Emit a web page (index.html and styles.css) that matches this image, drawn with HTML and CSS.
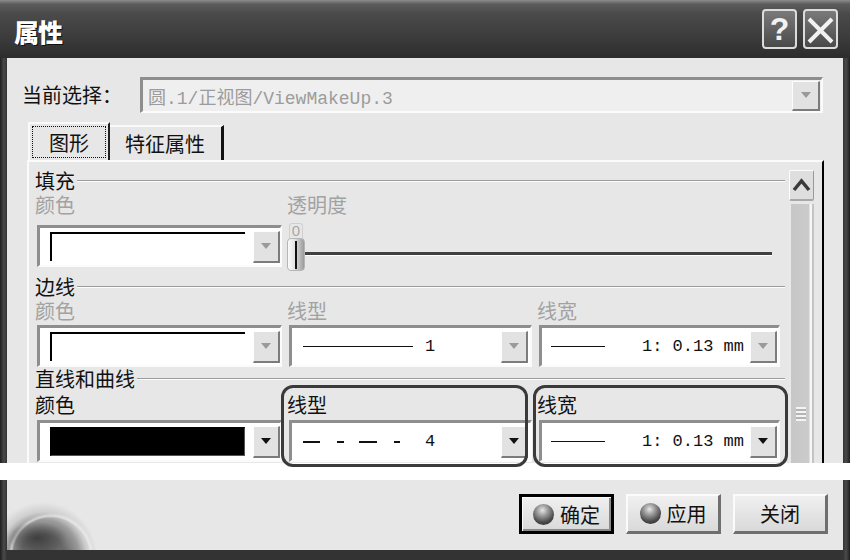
FILE: index.html
```html
<!DOCTYPE html>
<html lang="zh-CN">
<head>
<meta charset="utf-8">
<title>属性</title>
<link rel="stylesheet" href="styles.css">
</head>
<body>
<div class="window">
  <div class="titlebar">
    <span class="title">属性</span>
    <div class="title-btns">
      <span class="tbtn help">?</span>
      <span class="tbtn close"><svg width="35" height="40" viewBox="0 0 35 40"><path d="M6 10 L29 33 M29 10 L6 33" stroke="#f2f2f2" stroke-width="4" fill="none"/></svg></span>
    </div>
  </div>

  <div class="client">
    <div class="selrow">
      <span class="sellabel">当前选择：</span>
      <div class="selcombo">
        <span class="seltext">圆.1/正视图/ViewMakeUp.3</span>
        <span class="dd dis"></span>
      </div>
    </div>

    <div class="tabs">
      <div class="tab active"><span class="focus">图形</span></div>
      <div class="tab">特征属性</div>
    </div>

    <div class="panel">
      <div class="content">
        <div class="group g1">
          <div class="legend"><span>填充</span><i class="etch"></i></div>
          <div class="grid">
            <div class="lbl dis">颜色</div>
            <div class="lbl dis wide">透明度</div>
            <div class="combo">
              <span class="swatch"></span>
              <span class="dd dis"></span>
            </div>
            <div class="slider wide">
              <div class="thumb">
                <span class="tick">0</span>
                <span class="knob"></span>
              </div>
              <div class="track"></div>
            </div>
          </div>
        </div>

        <div class="group g2">
          <div class="legend"><span>边线</span><i class="etch"></i></div>
          <div class="grid">
            <div class="lbl dis">颜色</div>
            <div class="lbl dis">线型</div>
            <div class="lbl dis">线宽</div>
            <div class="combo">
              <span class="swatch"></span>
              <span class="dd dis"></span>
            </div>
            <div class="combo lt">
              <span class="sample long"></span>
              <span class="val">1</span>
              <span class="dd dis"></span>
            </div>
            <div class="combo lw">
              <span class="sample short"></span>
              <span class="val right">1: 0.13 mm</span>
              <span class="dd dis"></span>
            </div>
          </div>
        </div>

        <div class="group g3">
          <div class="legend"><span>直线和曲线</span><i class="etch"></i></div>
          <div class="grid">
            <div class="lbl">颜色</div>
            <div class="lbl">线型</div>
            <div class="lbl">线宽</div>
            <div class="combo">
              <span class="swatch black"></span>
              <span class="dd"></span>
            </div>
            <div class="combo lt">
              <svg class="dash" width="110" height="4" viewBox="0 0 110 4"><path d="M0 2 H17 M34 2 H41 M56 2 H74 M91 2 H97" stroke="#111" stroke-width="2" fill="none"/></svg>
              <span class="val">4</span>
              <span class="dd"></span>
            </div>
            <div class="combo lw">
              <span class="sample short"></span>
              <span class="val right">1: 0.13 mm</span>
              <span class="dd"></span>
            </div>
          </div>
        </div>
      </div>

      <div class="scrollbar">
        <div class="sb-up"><svg width="23" height="28" viewBox="0 0 23 28"><path d="M4 19 L11.5 10 L19 19" stroke="#3a3a3a" stroke-width="3.5" fill="none"/></svg></div>
        <div class="sb-track"><span class="grip"></span></div>
      </div>
    </div>
  </div>

  <div class="band"></div>

  <div class="footer">
    <button class="btn default"><span class="orb"></span>确定</button>
    <button class="btn"><span class="orb"></span>应用</button>
    <button class="btn">关闭</button>
  </div>

  <div class="mark m1"></div>
  <div class="mark m2"></div>
</div>
</body>
</html>
```

FILE: styles.css
```css
html, body {
  margin: 0;
  padding: 0;
  background: #ffffff;
}

.window {
  position: relative;
  width: 850px;
  height: 560px;
  background: linear-gradient(to right, #1f1f1f 0, #4a4a4a 4px, #333 7px, #333 843px, #4a4a4a 846px, #1f1f1f 850px);
  display: flex;
  flex-direction: column;
  font-family: "Noto Sans CJK SC", "Noto Sans", sans-serif;
  color: #111;
  overflow: hidden;
}

/* title bar */
.titlebar {
  flex: none;
  height: 58px;
  box-sizing: border-box;
  display: flex;
  align-items: center;
  padding: 4px 12px 0 14px;
  background: linear-gradient(#8d8d8d 0, #5d5d5d 4px, #4a4a4a 14px, #3d3d3d 36px, #2c2c2c 58px);
}

.title {
  font-size: 25px;
  font-weight: 900;
  color: #fff;
  letter-spacing: -1px;
  text-shadow: 1px 1px 0 #111;
}

.title-btns {
  margin-left: auto;
  display: flex;
  gap: 6px;
  margin-top: -4px;
}

.tbtn {
  width: 35px;
  height: 40px;
  box-sizing: border-box;
  border: 2px solid #dcdcdc;
  border-radius: 4px;
  background: linear-gradient(#7a7a7a, #4a4a4a);
  color: #f2f2f2;
  display: flex;
  align-items: center;
  justify-content: center;
  overflow: hidden;
}

.tbtn.help {
  font-family: "Liberation Sans", sans-serif;
  font-size: 32px;
  font-weight: 700;
}

.tbtn svg {
  display: block;
  flex: none;
}

/* client area */
.client {
  flex: none;
  height: 405px;
  box-sizing: border-box;
  margin: 0 7px;
  padding: 19px 19px 0 15px;
  background: #e7e7e7;
  overflow: hidden;
}

.selrow {
  display: flex;
  align-items: center;
  height: 36px;
  gap: 18px;
}

.sellabel {
  font-size: 20px;
  line-height: 36px;
  width: 100px;
  flex: none;
}

.selcombo {
  flex: none;
  width: 683px;
  height: 36px;
  box-sizing: border-box;
  border-style: solid;
  border-width: 3px 2px 2px 3px;
  border-color: #8e8e8e #fbfbfb #fbfbfb #8e8e8e;
  background: #efefef;
  display: flex;
  align-items: center;
  padding: 0 1px 0 5px;
}

.seltext {
  font-family: "Liberation Mono", "Noto Sans CJK SC", monospace;
  font-size: 18px;
  color: #9c9c9c;
}

.selcombo .dd {
  margin-left: auto;
  height: 30px;
  width: 28px;
}

/* dropdown button */
.dd {
  flex: none;
  position: relative;
  width: 27px;
  height: 32px;
  box-sizing: border-box;
  background: #e2e2e2;
  border-style: solid;
  border-width: 1px 2px 2px 1px;
  border-color: #fdfdfd #7c7c7c #7c7c7c #fdfdfd;
}

.dd::after {
  content: "";
  position: absolute;
  left: 50%;
  top: 50%;
  margin: -3px 0 0 -5px;
  border-left: 5px solid transparent;
  border-right: 5px solid transparent;
  border-top: 6px solid #111;
}

.dd.dis::after {
  border-top-color: #9a9a9a;
}

/* tabs */
.tabs {
  display: flex;
  align-items: flex-end;
  height: 38px;
  margin: 9px 0 0 6px;
}

.tab {
  height: 35px;
  box-sizing: border-box;
  font-size: 20px;
  line-height: 33px;
  border-top: 2px solid #fafafa;
  border-right: 3px solid #111;
  padding: 0 16px 0 15px;
}

.tab.active {
  height: 38px;
  width: 82px;
  padding: 2px;
  border-left: 2px solid #fafafa;
  border-right: 2px solid #222;
  line-height: normal;
}

.focus {
  display: flex;
  align-items: center;
  justify-content: center;
  height: 100%;
  box-sizing: border-box;
  border: 1px dotted #111;
}

/* panel */
.panel {
  display: flex;
  margin-left: 5px;
  height: 320px;
  box-sizing: border-box;
  border-top: 2px solid #fbfbfb;
  border-left: 2px solid #fbfbfb;
  border-right: 2px solid #000;
  padding: 7px 8px 0 6px;
}

.content {
  width: 750px;
  flex: none;
}

.legend {
  display: flex;
  align-items: center;
  height: 24px;
  font-size: 20px;
  line-height: 24px;
}

.etch {
  flex: 1;
  height: 0;
  margin-left: 2px;
  border-top: 1px solid #9b9b9b;
  border-bottom: 1px solid #fdfdfd;
}

.grid {
  display: grid;
  grid-template-columns: 247px 245px 243px;
  column-gap: 5px;
  width: 745px;
}

.g1 .grid { row-gap: 8px; }
.g2 { margin-top: 8px; }
.g2 .grid { row-gap: 2px; }
.g3 .grid { row-gap: 3px; margin-top: 2px; }

.lbl {
  height: 24px;
  font-size: 20px;
  line-height: 24px;
  color: #111;
}

.lbl.dis {
  color: #a2a2a2;
}

.wide {
  grid-column: span 2;
}

/* combo boxes */
.combo {
  margin-left: 2px;
  height: 42px;
  box-sizing: border-box;
  border-style: solid;
  border-width: 3px 2px 2px 3px;
  border-color: #8e8e8e #fbfbfb #fbfbfb #8e8e8e;
  background: #ffffff;
  display: flex;
  align-items: center;
  padding: 0 0 0 10px;
}

.swatch {
  flex: 1;
  height: 29px;
  margin-right: 8px;
  box-sizing: border-box;
  border-top: 2px solid #000;
  border-left: 2px solid #000;
  background: #fff;
}

.swatch.black {
  background: #000;
  border-bottom: 1px solid #555;
  border-right: 1px solid #555;
}

.combo.lt {
  padding: 0 2px 0 11px;
}

.combo.lw {
  padding: 0 1px 0 9px;
}

.sample {
  flex: none;
  height: 0;
  border-top: 1.5px solid #111;
}

.sample.long {
  width: 110px;
}

.sample.short {
  width: 54px;
}

.dash {
  flex: none;
  display: block;
}

.val {
  flex: 1;
  margin-left: 12px;
  font-family: "Liberation Mono", monospace;
  font-size: 17px;
  color: #111;
}

.val.right {
  text-align: right;
  margin-right: 6px;
  white-space: nowrap;
}

/* slider */
.slider {
  display: flex;
  align-items: flex-start;
  height: 42px;
}

.thumb {
  flex: none;
  width: 18px;
  margin-top: -2px;
  display: flex;
  flex-direction: column;
  align-items: center;
}

.tick {
  width: 12px;
  height: 14px;
  font-family: "Liberation Sans", sans-serif;
  font-size: 15px;
  line-height: 14px;
  color: #a8a8a8;
  text-align: center;
  border: 1px solid #d0d0d0;
  border-bottom: none;
  border-radius: 3px 3px 0 0;
}

.knob {
  position: relative;
  width: 18px;
  height: 33px;
  box-sizing: border-box;
  border-radius: 4px;
  background: linear-gradient(to right, #fbfbfb 0, #e4e4e4 40%, #9a9a9a 100%);
  border: 1px solid #b5b5b5;
}

.knob::after {
  content: "";
  position: absolute;
  left: 7px;
  top: 2px;
  bottom: 1px;
  width: 2px;
  background: #111;
}

.track {
  flex: 1;
  margin: 27px 8px 0 0;
  height: 3px;
  background: #404040;
  border-bottom: 1px solid #fdfdfd;
}

/* scrollbar */
.scrollbar {
  flex: none;
  width: 25px;
  margin: 1px 0 0 4px;
  display: flex;
  flex-direction: column;
}

.sb-up {
  height: 31px;
  box-sizing: border-box;
  border-style: solid;
  border-width: 1px 1px 2px 1px;
  border-color: #fdfdfd #9a9a9a #a8a8a8 #fdfdfd;
  border-radius: 2px;
  background: #dedede;
}

.sb-up svg {
  display: block;
}

.sb-track {
  flex: 1;
  margin-top: 3px;
  background: linear-gradient(to right, #e9e9e9 0, #e9e9e9 2px, #c7c7c7 2px, #cbcbcb 20px, #f6f6f6 21px, #f6f6f6 23px, #c4c4c4 23px);
}

.grip {
  display: block;
  width: 10px;
  height: 14px;
  margin: 203px 0 0 7px;
  background: repeating-linear-gradient(#f4f4f4 0, #f4f4f4 2px, #b4b4b4 2px, #b4b4b4 4px);
}

/* cut band */
.band {
  flex: none;
  height: 17px;
  background: #ffffff;
}

/* footer */
.footer {
  flex: none;
  height: 70px;
  margin: 0 7px;
  box-sizing: border-box;
  padding: 14px 15px 0 0;
  display: flex;
  justify-content: flex-end;
  align-items: flex-start;
  gap: 12px;
  background:
    radial-gradient(ellipse 30px 16px at 30px 58px, rgba(50,50,50,0.75) 0, rgba(50,50,50,0) 100%),
    radial-gradient(circle at 44px 76px, rgba(231,231,231,0) 0, rgba(231,231,231,0) 38px, rgba(245,245,245,0.6) 40px, rgba(231,231,231,0) 43px),
    radial-gradient(circle at 36px 76px, #5a5a5a 0, #6a6a6a 22px, #9a9a9a 36px, #cfcfcf 44px, rgba(231,231,231,0) 54px),
    #e7e7e7;
}

.btn {
  width: 95px;
  height: 40px;
  box-sizing: border-box;
  border-style: solid;
  border-width: 2px 3px 3px 2px;
  border-color: #fbfbfb #6f6f6f #6f6f6f #fbfbfb;
  background: linear-gradient(#f0f0f0, #d9d9d9);
  font-family: "Noto Sans CJK SC", sans-serif;
  font-size: 20px;
  color: #111;
  display: flex;
  align-items: center;
  justify-content: center;
  gap: 6px;
  padding: 0;
}

.btn.default {
  border: 3px solid #000;
  box-shadow: inset 1px 1px 0 #fbfbfb, inset -2px -2px 0 #8a8a8a;
}

.orb {
  flex: none;
  width: 21px;
  height: 21px;
  border-radius: 50%;
  background: radial-gradient(circle at 45% 30%, #e6e6e6 0, #9a9a9a 30%, #4a4a4a 65%, #222 100%);
}

/* annotation outlines drawn over the dialog */
.mark {
  position: absolute;
  top: 385px;
  height: 82px;
  box-sizing: border-box;
  border: 3px solid #3a3a3a;
  border-radius: 12px;
}

.m1 {
  left: 281px;
  width: 247px;
}

.m2 {
  left: 533px;
  width: 255px;
}
```
